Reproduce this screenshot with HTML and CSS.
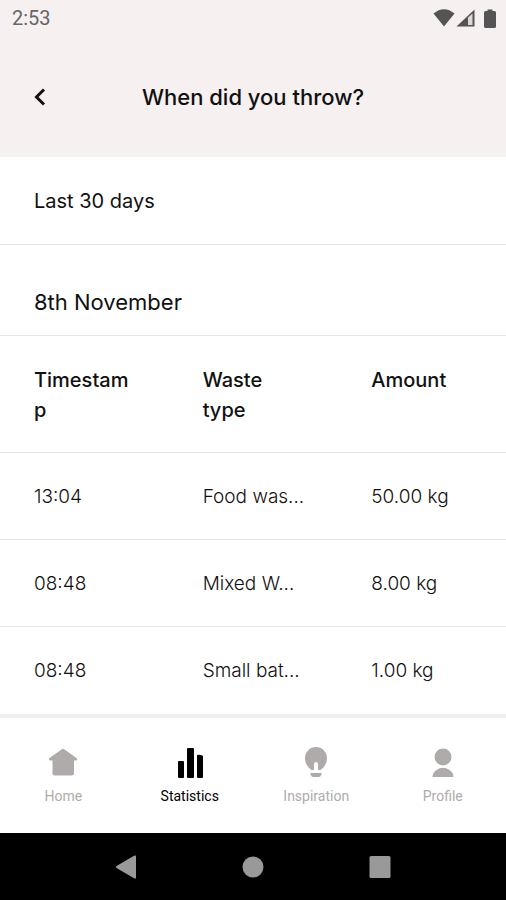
FILE: index.html
```html
<!DOCTYPE html>
<html lang="en">
<head>
<meta charset="utf-8">
<meta name="viewport" content="width=device-width, initial-scale=1">
<title>When did you throw?</title>
<link rel="stylesheet" href="styles.css">
</head>
<body>
<div class="app">
  <header class="top">
    <div class="status">
      <span>2:53</span>
      <div class="status-icons">
        <svg width="22" height="18" viewBox="0 0 22 18" aria-hidden="true"><path d="M0.5 4.5Q11-4 21.5 4.5L11 17.5Z"/></svg>
        <svg width="19" height="18" viewBox="0 0 19 18" aria-hidden="true"><path d="M0.5 17.500L18.500 0.500V17.500Z"/><path class="signal-gap" d="M12 8.500L16.500 4.500V16H12Z"/></svg>
        <svg class="battery" width="12" height="19" viewBox="0 0 12 19" aria-hidden="true"><path d="M3.500 0.500h5v1.500h2q1.500 0 1.500 1.500v14q0 1.500-1.500 1.500h-9q-1.500 0-1.500-1.500v-14q0-1.500 1.500-1.500h2z"/></svg>
      </div>
    </div>
    <div class="title-bar">
      <button class="back" type="button" aria-label="Back">
        <svg width="12" height="18" viewBox="0 0 12 18" aria-hidden="true"><path d="M10 1.500L2.500 9L10 16.500"/></svg>
      </button>
      <h1>When did you throw?</h1>
    </div>
  </header>

  <main>
    <button class="period" type="button">Last 30 days</button>
    <h2>8th November</h2>
    <table>
      <thead>
        <tr><th scope="col">Timestamp</th><th scope="col">Waste type</th><th scope="col">Amount</th></tr>
      </thead>
      <tbody>
        <tr><td>13:04</td><td>Food was...</td><td>50.00 kg</td></tr>
        <tr><td>08:48</td><td>Mixed W...</td><td>8.00 kg</td></tr>
        <tr><td>08:48</td><td>Small bat...</td><td>1.00 kg</td></tr>
      </tbody>
    </table>
  </main>

  <nav class="tabs" aria-label="Main">
    <a href="#home">
      <svg width="32" height="32" viewBox="0 0 32 32" aria-hidden="true"><path d="M14.500 3.500Q16 2.200 17.500 3.500L29.500 12Q31 13.500 29.500 14.500H27V27Q27 29.500 24.500 29.500H8Q5.500 29.500 5.500 27V14.500H3Q1 13.500 2.500 12Z"/></svg>
      <span>Home</span>
    </a>
    <a href="#statistics" class="active" aria-current="page">
      <svg width="32" height="32" viewBox="0 0 32 32" aria-hidden="true"><rect x="4" y="15" width="6" height="17" rx="1"/><rect x="13" y="2" width="7" height="30" rx="1"/><path d="M23 9q3-1 6 1v21q0 1-1 1h-4q-1 0-1-1z"/></svg>
      <span>Statistics</span>
    </a>
    <a href="#inspiration">
      <svg width="32" height="32" viewBox="0 0 32 32" aria-hidden="true"><path d="M11.500 24Q5 19.500 5 12A11 11 0 0 1 27 12Q27 19.500 20.500 24H18V18Q18 16 16 16Q14 16 14 18V24Z"/><path d="M10.500 27h11v1.500q-1 2.500-3 2.500h-5q-2 0-3-2.500z"/></svg>
      <span>Inspiration</span>
    </a>
    <a href="#profile">
      <svg width="32" height="32" viewBox="0 0 32 32" aria-hidden="true"><circle cx="16" cy="11" r="8.500"/><path d="M5.500 31Q5.500 26.500 9.500 24Q16 19.500 22.500 24Q26.500 26.500 26.500 31Z"/></svg>
      <span>Profile</span>
    </a>
  </nav>

  <div class="system">
    <button type="button" aria-label="System back"><svg width="24" height="24" viewBox="0 0 24 24" aria-hidden="true"><path d="M20.500 0.500Q22 0 22 1.500V22.500Q22 24 20.500 23.500L2.500 13Q1 12 2.500 11Z"/></svg></button>
    <button type="button" aria-label="System home"><svg width="24" height="24" viewBox="0 0 24 24" aria-hidden="true"><circle cx="12" cy="12" r="10.500"/></svg></button>
    <button type="button" aria-label="Recent apps"><svg width="24" height="24" viewBox="0 0 24 24" aria-hidden="true"><rect x="1.500" y="1" width="21" height="22" rx="1.500"/></svg></button>
  </div>
</div>
</body>
</html>
```
FILE: styles.css
```css
* {
  box-sizing: border-box;
}

body {
  margin: 0;
  background: #fff;
  color: #111;
  font-family: Inter, "Liberation Sans", sans-serif;
  font-size: 19px;
  line-height: 30px;
}

button {
  border: 0;
  padding: 0;
  background: none;
  color: inherit;
  font: inherit;
}

svg {
  display: block;
  fill: currentColor;
}

.app {
  display: flex;
  flex-direction: column;
  min-height: 100vh;
}

.top {
  background: #f6f0f0;
  padding-bottom: 36px;
}

.status {
  display: flex;
  align-items: center;
  justify-content: space-between;
  height: 36px;
  padding: 0 10px 0 12px;
  color: #686565;
  font-family: Roboto, sans-serif;
  font-size: 20px;
}

.status-icons {
  display: flex;
  align-items: center;
  gap: 1px;
  color: #555353;
}

.battery {
  margin-left: 8px;
}

.signal-gap {
  fill: #ddd8d8;
}

.title-bar {
  display: grid;
  grid-template-columns: 64px 1fr 64px;
  align-items: center;
  padding-top: 37px;
}

.back {
  display: flex;
  align-items: center;
  height: 48px;
  padding-left: 34px;
}

.back path {
  fill: none;
  stroke: #111;
  stroke-width: 3;
}

h1,
h2 {
  margin: 0;
  font-size: 22px;
  font-weight: 500;
}

h1 {
  text-align: center;
}

.period {
  display: block;
  width: 100%;
  padding: 29px 34px 28px;
  border-bottom: 1px solid #e6e6e6;
  font-size: 20px;
  font-weight: 400;
  text-align: left;
}

h2 {
  padding: 42px 34px 18px;
  border-bottom: 1px solid #e6e6e6;
  font-weight: 400;
}

table {
  width: 100%;
  table-layout: fixed;
  border-collapse: separate;
  border-spacing: 0;
}

th,
td {
  padding: 29px 34px 27px;
  border-bottom: 1px solid #e6e6e6;
  text-align: left;
  vertical-align: top;
  overflow-wrap: anywhere;
}

th {
  font-size: 20px;
  font-weight: 500;
}

td {
  padding-right: 0;
  font-weight: 300;
  white-space: nowrap;
}

tbody tr:last-child td {
  border-bottom: 0;
}

.tabs {
  display: grid;
  grid-template-columns: repeat(4, 1fr);
  margin-top: auto;
  padding: 28px 0;
  border-top: 4px solid #eee;
}

.tabs a {
  display: flex;
  flex-direction: column;
  align-items: center;
  gap: 9px;
  color: #b0abab;
  font-family: Roboto, sans-serif;
  font-size: 14px;
  line-height: 18px;
  text-decoration: none;
}

.tabs .active {
  color: #000;
}

.system {
  display: flex;
  justify-content: center;
  gap: 103px;
  padding: 22px 0 21px;
  background: #000;
  color: #999;
}
```
